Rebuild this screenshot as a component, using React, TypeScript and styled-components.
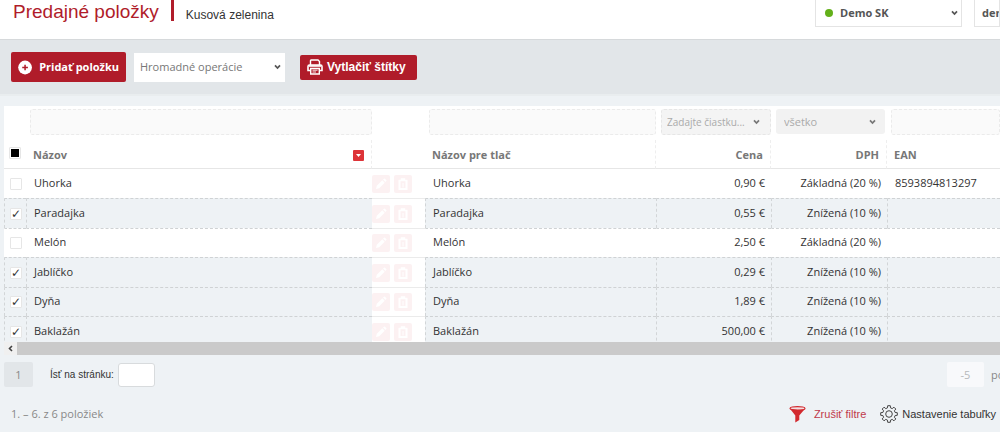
import React from "react";
import styled, { createGlobalStyle, css } from "styled-components";

const sans = `"Open Sans", "Noto Sans", sans-serif`;
const arial = `"Liberation Sans", sans-serif`;
const red = "#b01c2a";

const GlobalStyle = createGlobalStyle`
  * { box-sizing: border-box; }
  body {
    margin: 0;
    background: #eef2f5;
    color: #333;
    font: 11px/16px ${sans};
    overflow: hidden;
  }
  button, input, select { font: inherit; color: inherit; margin: 0; }
`;

const TopBar = styled.header`
  display: flex;
  align-items: flex-start;
  gap: 12px;
  height: 40px;
  padding-left: 13px;
  background: #fff;
  border-bottom: 1px solid #d6d9db;
`;

const Title = styled.h1`
  margin: 0;
  font: 19px/24px ${arial};
  color: ${red};
  white-space: nowrap;
`;

const TitleRule = styled.span`
  width: 3px;
  height: 21px;
  background: ${red};
`;

const Subtitle = styled.span`
  flex: 1;
  font: 12px/30px ${arial};
  color: #333;
`;

const SelectWrap = styled.label<{ $w: number; $h: number; $look: "top" | "plain" | "dashed" | "grey" }>`
  display: grid;
  flex: none;
  align-items: center;
  width: ${(p) => p.$w}px;
  height: ${(p) => p.$h}px;
  background: #fff;
  color: #777;
  > * { grid-area: 1 / 1; }
  ${(p) => p.$look === "top" && css`
    border: 1px solid #e4e4e4;
    border-top: 0;
    font-weight: 700;
    color: #555;
  `}
  ${(p) => p.$look === "dashed" && css`
    border: 1px dashed #e6e6e6;
    background: #f4f4f4;
    color: #aaa;
    border-radius: 3px;
    font-size: 10px;
  `}
  ${(p) => p.$look === "grey" && css`
    background: #f2f2f2;
    color: #aaa;
    border-radius: 3px;
  `}
`;

const Select = styled.select<{ $pad: number; $bare?: boolean }>`
  appearance: none;
  width: 100%;
  height: 100%;
  border: 0;
  padding: 0 ${(p) => (p.$bare ? 0 : 20)}px 0 ${(p) => p.$pad}px;
  background: transparent;
  outline: none;
  opacity: 1;
`;

const Chevron = styled.svg<{ $right: number }>`
  justify-self: end;
  margin-right: ${(p) => p.$right}px;
  pointer-events: none;
`;

const Dot = styled.span`
  width: 8px;
  height: 8px;
  margin-left: 9px;
  border-radius: 50%;
  background: #63b01a;
`;

const Toolbar = styled.div`
  display: flex;
  align-items: center;
  height: 56px;
  padding-left: 11px;
  background: #e2e6e9;
  border-bottom: 2px solid #e9edef;
`;

const ActionButton = styled.button<{ $h: number; $w: number; $arial?: boolean }>`
  display: flex;
  align-items: center;
  gap: ${(p) => (p.$arial ? 4 : 7)}px;
  width: ${(p) => p.$w}px;
  height: ${(p) => p.$h}px;
  padding: 0 7px;
  border: 0;
  border-radius: 2px;
  background: ${red};
  color: #fff;
  white-space: nowrap;
  font: 700 ${(p) => (p.$arial ? `12px/16px ${arial}` : `11px/16px ${sans}`)};
`;

const BulkSlot = styled.div`
  margin: 0 15px 0 8px;
`;

const Scroller = styled.div`
  height: 236px;
  margin: 10px 0 0 4px;
  overflow: hidden;
  background: #fff;
`;

const Table = styled.table`
  width: 100%;
  table-layout: fixed;
  border-collapse: separate;
  border-spacing: 0;
`;

const FilterCell = styled.td<{ $l?: number }>`
  height: 34px;
  padding: 3px 0 0 ${(p) => p.$l ?? 4}px;
  vertical-align: top;
`;

const FilterInput = styled.input`
  display: block;
  width: 100%;
  height: 26px;
  border: 1px dashed #ebebeb;
  border-radius: 3px;
  background: #fafafa;
  padding: 0 6px;
`;

const Th = styled.th<{ $right?: boolean; $line?: boolean; $check?: boolean }>`
  height: 29px;
  padding: ${(p) => (p.$check ? "0 0 2px 5px" : "2px 7px 0 7px")};
  border-bottom: 1px solid #e6e6e6;
  border-right: ${(p) => (p.$line ? "1px dashed #eee" : "0")};
  text-align: ${(p) => (p.$right ? "right" : "left")};
  color: #777;
  font-weight: 700;
`;

const HeadInner = styled.div`
  display: flex;
  justify-content: space-between;
  align-items: center;
`;

const SortButton = styled.button`
  display: grid;
  place-items: center;
  width: 11px;
  height: 11px;
  padding: 0;
  border: 0;
  border-radius: 1px;
  background: #dd3338;
`;

const Row = styled.tr<{ $on: boolean }>`
  background: ${(p) => (p.$on ? "#eef2f5" : "#fff")};
  &:nth-child(even) { height: 30px; }
  &:nth-child(odd) { height: 29px; }
  &:first-child td { border-top: 0; }
  td { border-left-color: ${(p) => (p.$on ? "#d2d5d7" : "transparent")}; }
`;

const Td = styled.td<{ $right?: boolean }>`
  padding: 0 6px 2px 7px;
  border-top: 1px dashed #cfd2d4;
  border-left: 1px dashed;
  text-align: ${(p) => (p.$right ? "right" : "left")};
  white-space: nowrap;
`;

const CheckTd = styled(Td)`
  padding: 0 5px;
`;

const ToolsTd = styled.td`
  padding: 0;
  border-top: 1px solid #ebebeb;
  background: #fff;
`;

const Tools = styled.div`
  display: flex;
  gap: 4px;
`;

const ToolButton = styled.button`
  display: grid;
  place-items: center;
  width: 18px;
  height: 18px;
  padding: 0;
  border: 0;
  border-radius: 2px;
  background: #fcf1f2;
`;

const Check = styled.input`
  appearance: none;
  display: grid;
  place-items: center;
  width: 12px;
  height: 12px;
  border: 1px solid #e6e6e6;
  border-radius: 1px;
  background: #fff;
  &:checked::before {
    content: "✓";
    font: 700 12px/10px "DejaVu Sans", sans-serif;
    color: #333;
  }
  &:indeterminate::before {
    content: "";
    width: 8px;
    height: 8px;
    background: #000;
  }
`;

const ScrollBar = styled.div`
  display: flex;
  height: 13px;
  margin-left: 4px;
`;

const ScrollArrow = styled.button`
  display: grid;
  place-items: center;
  width: 13px;
  padding: 0;
  border: 0;
  background: #f0f0f0;
`;

const ScrollThumb = styled.div`
  flex: 1;
  background: #cacaca;
`;

const Pager = styled.nav`
  display: flex;
  align-items: center;
  height: 25px;
  margin: 7px 0 0 4px;
  white-space: nowrap;
  color: #888;
`;

const PageButton = styled.button<{ $light?: boolean }>`
  flex: none;
  width: ${(p) => (p.$light ? 37 : 29)}px;
  height: 25px;
  padding: 0;
  border: 0;
  border-radius: 2px;
  background: ${(p) => (p.$light ? "#f8f9fb" : "#e2e6e9")};
  color: ${(p) => (p.$light ? "#b5b8ba" : "#888")};
`;

const GoTo = styled.label`
  display: flex;
  align-items: center;
  gap: 4px;
  margin: 0 auto 0 17px;
  font: 10px/16px ${arial};
  color: #333;
`;

const PageInput = styled.input`
  width: 37px;
  height: 24px;
  border: 1px solid #d8dbdd;
  border-radius: 3px;
  background: #fff;
`;

const PageSize = styled.span`
  width: 9px;
  margin-left: 7px;
`;

const Footer = styled.footer`
  display: flex;
  align-items: center;
  gap: 14px;
  height: 24px;
  margin-top: 15px;
  padding: 0 4px 0 11px;
  color: #888;
`;

const Count = styled.span`
  margin-right: auto;
`;

const FootLink = styled.a<{ $red?: boolean }>`
  display: flex;
  align-items: center;
  gap: ${(p) => (p.$red ? 8 : 4)}px;
  font: 11px/16px ${arial};
  color: ${(p) => (p.$red ? "#c0394b" : "#333")};
  text-decoration: none;
`;

const Arrow = ({ right, color = "#555" }: { right: number; color?: string }) => (
  <Chevron $right={right} width="7" height="6" viewBox="0 0 7 6" aria-hidden="true">
    <path d="M1 1.3 3.5 4 6 1.3" fill="none" stroke={color} strokeWidth="1.7" />
  </Chevron>
);

const PlusIcon = () => (
  <svg width="15" height="15" viewBox="0 0 15 15" aria-hidden="true">
    <circle cx="7.5" cy="7.5" r="7.3" fill="#fff" />
    <path d="M7.5 4.5v6M4.5 7.5h6" stroke={red} strokeWidth="1.6" />
  </svg>
);

const PrinterIcon = () => (
  <svg width="16" height="16" viewBox="0 0 16 16" fill="none" stroke="#fff" aria-hidden="true">
    <path d="M3.5 6V1.5Q3.5 1 4 1h7l1.5 1.5V6" strokeWidth="1.4" />
    <path d="M3 11.5H1V7.5Q1 6 2.5 6h11Q15 6 15 7.5v4h-2" strokeWidth="1.6" />
    <path d="M2 7h12" strokeWidth="1.6" />
    <path d="M3.7 9.5h8.6V15H3.7z" strokeWidth="1.4" />
    <path d="M5.5 11.2h5M5.5 13h3.5" strokeWidth="0.9" />
  </svg>
);

const PencilIcon = () => (
  <svg width="12" height="12" viewBox="0 0 12 12" fill="#fff" aria-hidden="true">
    <path d="M1 11l.8-3.2L7.3 2.3l2.400 2.400L4.200 10.200z" />
    <path d="M8 1.600 8.900.7q.5-.4 1 0l1.400 1.400q.4.500 0 1l-.9.900z" />
  </svg>
);

const TrashIcon = () => (
  <svg width="10" height="12" viewBox="0 0 10 12" fill="none" stroke="#fff" aria-hidden="true">
    <path d="M0.5 2.500h9M3.500 2V1h3v1" strokeWidth="1.4" />
    <path d="M1.500 3v8h7V3" strokeWidth="2" />
    <path d="M5 5v4.500" strokeWidth="1" />
  </svg>
);

const FunnelIcon = () => (
  <svg width="17" height="17" viewBox="0 0 17 17" aria-hidden="true">
    <path d="M.8 2.500 6.300 9.500v7l4-2.500V9.500l5.900-7z" fill="#d22a2f" />
    <ellipse cx="8.500" cy="2.400" rx="7.500" ry="1.700" fill="#f4dfe1" stroke="#d22a2f" strokeWidth="1.200" />
  </svg>
);

const teeth = Array.from({ length: 8 }, (_, i) => {
  const point = (r: number, deg: number) => {
    const a = ((i * 45 + deg) * Math.PI) / 180;
    return `${(9 + r * Math.cos(a)).toFixed(2)} ${(9 + r * Math.sin(a)).toFixed(2)}`;
  };
  return `${point(6.3, -14)} L${point(8.4, -9)} L${point(8.4, 9)} L${point(6.3, 14)}`;
});

const GearIcon = () => (
  <svg width="18" height="18" viewBox="0 0 18 18" fill="none" stroke="#444" strokeLinejoin="round" aria-hidden="true">
    <path d={`M${teeth.join(" L")}Z`} />
    <circle cx="9" cy="9" r="3.300" />
  </svg>
);

const items = [
  { name: "Uhorka", price: "0,90 €", vat: "Základná (20 %)", ean: "8593894813297", on: false },
  { name: "Paradajka", price: "0,55 €", vat: "Znížená (10 %)", ean: "", on: true },
  { name: "Melón", price: "2,50 €", vat: "Základná (20 %)", ean: "", on: false },
  { name: "Jablíčko", price: "0,29 €", vat: "Znížená (10 %)", ean: "", on: true },
  { name: "Dyňa", price: "1,89 €", vat: "Znížená (10 %)", ean: "", on: true },
  { name: "Baklažán", price: "500,00 €", vat: "Znížená (10 %)", ean: "", on: true },
];

const columns = [22, 346, 53, 231, 115, 116];

export default function App() {
  const markPartial = (el: HTMLInputElement | null) => {
    if (el) el.indeterminate = true;
  };
  return (
    <>
      <GlobalStyle />
      <TopBar>
        <Title>Predajné položky</Title>
        <TitleRule />
        <Subtitle>Kusová zelenina</Subtitle>
        <SelectWrap $w={147} $h={27} $look="top">
          <Dot />
          <Select $pad={24} aria-label="Cloud">
            <option>Demo SK</option>
          </Select>
          <Arrow right={3} />
        </SelectWrap>
        <SelectWrap $w={26} $h={27} $look="top">
          <Select $pad={7} $bare aria-label="Používateľ">
            <option>dem</option>
          </Select>
        </SelectWrap>
      </TopBar>

      <Toolbar>
        <ActionButton $w={115} $h={30}>
          <PlusIcon />
          Pridať položku
        </ActionButton>
        <BulkSlot>
          <SelectWrap $w={151} $h={29} $look="plain">
            <Select $pad={6} aria-label="Hromadné operácie">
              <option>Hromadné operácie</option>
            </Select>
            <Arrow right={4} />
          </SelectWrap>
        </BulkSlot>
        <ActionButton $w={117} $h={25} $arial>
          <PrinterIcon />
          Vytlačiť štítky
        </ActionButton>
      </Toolbar>

      <Scroller>
        <Table>
          <colgroup>
            {columns.map((w, i) => (
              <col key={i} width={w} />
            ))}
            <col />
          </colgroup>
          <thead>
            <tr>
              <FilterCell />
              <FilterCell>
                <FilterInput aria-label="Filter názvu" />
              </FilterCell>
              <FilterCell />
              <FilterCell>
                <FilterInput aria-label="Filter názvu pre tlač" />
              </FilterCell>
              <FilterCell $l={5}>
                <SelectWrap $w={110} $h={26} $look="dashed">
                  <Select $pad={5} aria-label="Filter ceny">
                    <option>Zadajte čiastku...</option>
                  </Select>
                  <Arrow right={10} color="#777" />
                </SelectWrap>
              </FilterCell>
              <FilterCell $l={5}>
                <SelectWrap $w={109} $h={25} $look="grey">
                  <Select $pad={8} aria-label="Filter DPH">
                    <option>všetko</option>
                  </Select>
                  <Arrow right={9} color="#777" />
                </SelectWrap>
              </FilterCell>
              <FilterCell>
                <FilterInput aria-label="Filter EAN" />
              </FilterCell>
            </tr>
            <tr>
              <Th $check>
                <Check type="checkbox" ref={markPartial} aria-label="Vybrať všetko" />
              </Th>
              <Th $line>
                <HeadInner>
                  Názov
                  <SortButton aria-label="Zoradiť">
                    <svg width="5" height="3" viewBox="0 0 5 3" aria-hidden="true">
                      <path d="M0 0h5L2.500 3z" fill="#fff" />
                    </svg>
                  </SortButton>
                </HeadInner>
              </Th>
              <Th />
              <Th $line>Názov pre tlač</Th>
              <Th $line $right>Cena</Th>
              <Th $line $right>DPH</Th>
              <Th>EAN</Th>
            </tr>
          </thead>
          <tbody>
            {items.map((it) => (
              <Row key={it.name} $on={it.on}>
                <CheckTd>
                  <Check type="checkbox" defaultChecked={it.on} aria-label={it.name} />
                </CheckTd>
                <Td>{it.name}</Td>
                <ToolsTd>
                  <Tools>
                    <ToolButton aria-label="Upraviť"><PencilIcon /></ToolButton>
                    <ToolButton aria-label="Odstrániť"><TrashIcon /></ToolButton>
                  </Tools>
                </ToolsTd>
                <Td>{it.name}</Td>
                <Td $right>{it.price}</Td>
                <Td $right>{it.vat}</Td>
                <Td>{it.ean}</Td>
              </Row>
            ))}
          </tbody>
        </Table>
      </Scroller>

      <ScrollBar>
        <ScrollArrow aria-label="Posunúť doľava">
          <svg width="5" height="7" viewBox="0 0 5 7" aria-hidden="true">
            <path d="M4 1 1.500 3.500 4 6" fill="none" stroke="#444" strokeWidth="1.600" />
          </svg>
        </ScrollArrow>
        <ScrollThumb />
      </ScrollBar>

      <Pager>
        <PageButton>1</PageButton>
        <GoTo>
          Ísť na stránku:
          <PageInput />
        </GoTo>
        <PageButton $light>-5</PageButton>
        <PageSize>po</PageSize>
      </Pager>

      <Footer>
        <Count>1. – 6. z 6 položiek</Count>
        <FootLink href="#" $red>
          <FunnelIcon />
          Zrušiť filtre
        </FootLink>
        <FootLink href="#">
          <GearIcon />
          Nastavenie tabuľky
        </FootLink>
      </Footer>
    </>
  );
}
